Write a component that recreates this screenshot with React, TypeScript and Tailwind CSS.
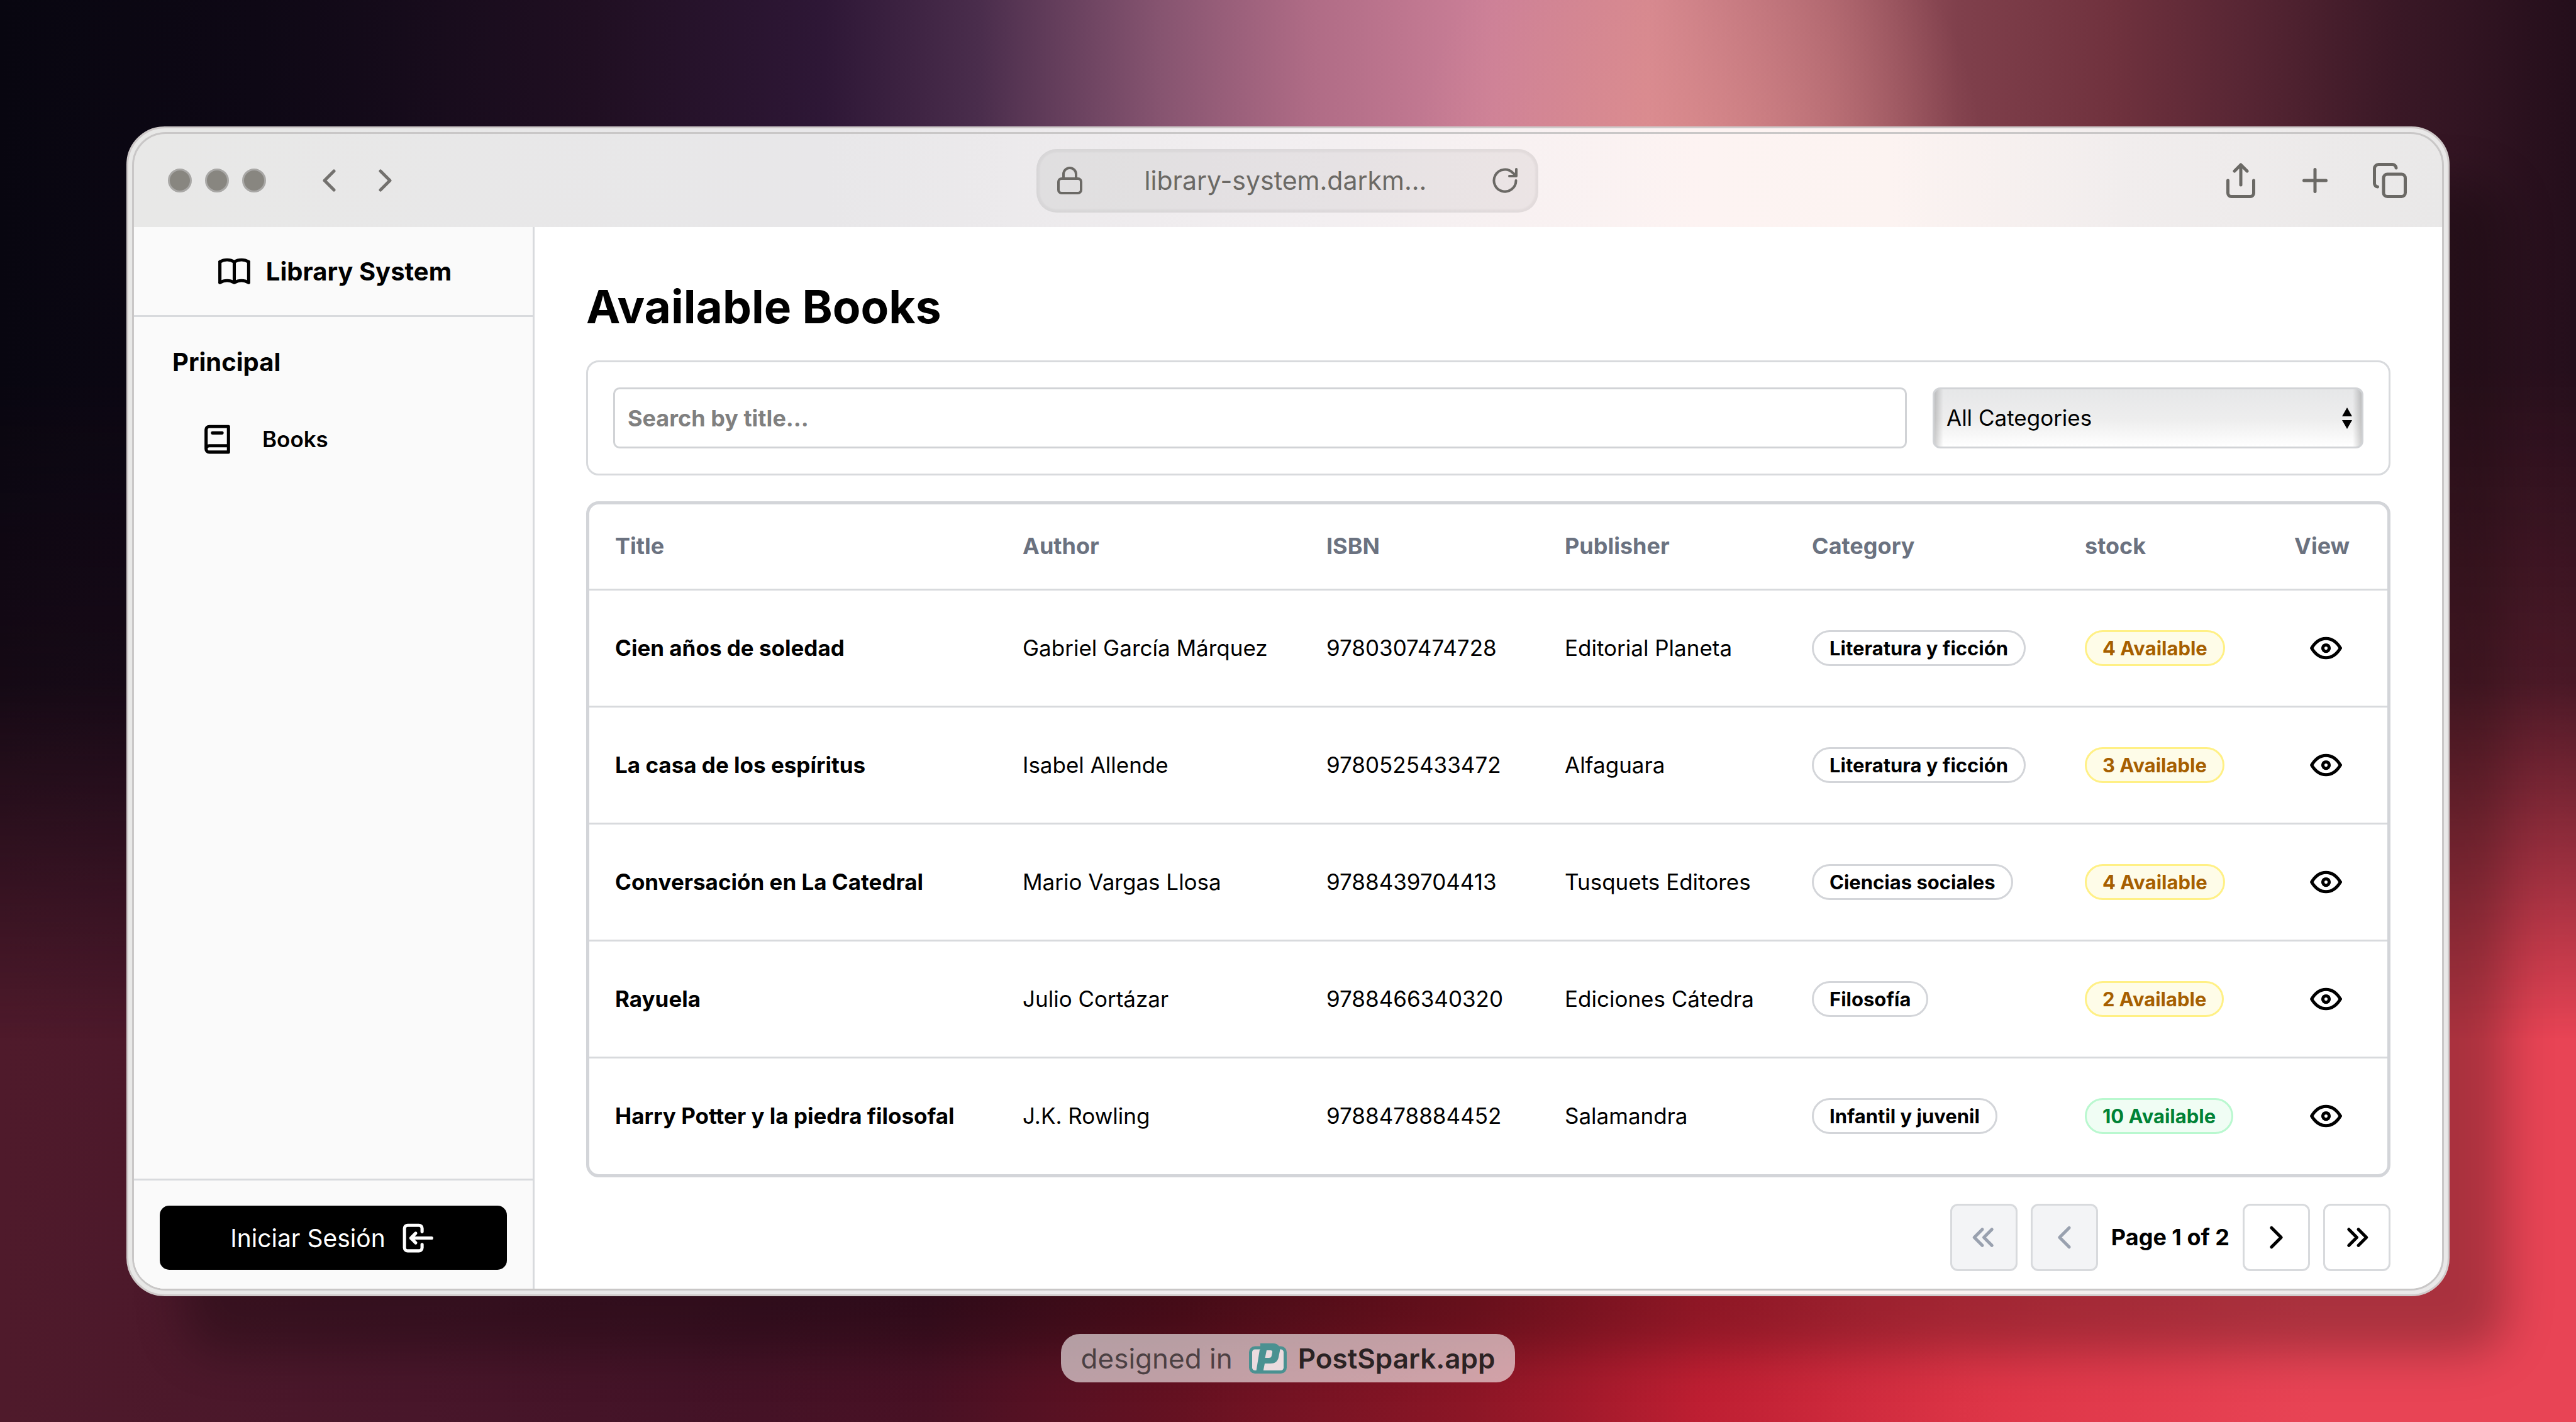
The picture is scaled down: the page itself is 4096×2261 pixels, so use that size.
import type { ReactNode } from "react";

type Book = {
  title: string;
  author: string;
  isbn: string;
  publisher: string;
  category: string;
  stock: number;
};

const BOOKS: Book[] = [
  { title: "Cien años de soledad", author: "Gabriel García Márquez", isbn: "9780307474728", publisher: "Editorial Planeta", category: "Literatura y ficción", stock: 4 },
  { title: "La casa de los espíritus", author: "Isabel Allende", isbn: "9780525433472", publisher: "Alfaguara", category: "Literatura y ficción", stock: 3 },
  { title: "Conversación en La Catedral", author: "Mario Vargas Llosa", isbn: "9788439704413", publisher: "Tusquets Editores", category: "Ciencias sociales", stock: 4 },
  { title: "Rayuela", author: "Julio Cortázar", isbn: "9788466340320", publisher: "Ediciones Cátedra", category: "Filosofía", stock: 2 },
  { title: "Harry Potter y la piedra filosofal", author: "J.K. Rowling", isbn: "9788478884452", publisher: "Salamandra", category: "Infantil y juvenil", stock: 10 },
];

function Icon({ children }: { children: ReactNode }) {
  return (
    <svg
      viewBox="0 0 24 24"
      fill="none"
      stroke="currentColor"
      strokeWidth="2"
      strokeLinecap="round"
      strokeLinejoin="round"
      aria-hidden="true"
      className="size-[61px] shrink-0"
    >
      {children}
    </svg>
  );
}

function Backdrop() {
  return (
    <div className="absolute inset-0 -z-10 overflow-hidden bg-[linear-gradient(to_right,#4f1a2b_0%,#48162a_16%,#3f1024_36%,#5a1020_46%,#8c1626_57%,#c62034_66%,#dd3446_76%,#e84455_90%,#e84455_100%)]">
      <div className="absolute inset-0 bg-[linear-gradient(to_right,#080610_0%,#0e0815_10%,#200f22_23%,#2e1736_32%,#4a2d4c_38%,#865470_45%,#b06c86_51%,#cc8098_58%,#d3868f_64%,#a8606a_71%,#80404c_76%,#70323e_82%,#582634_87%,#3a1826_93%,#240e1b_100%)] [mask-image:linear-gradient(to_bottom,black_26%,#000000d0_48%,transparent_73%)]" />
      <div className="absolute inset-0 bg-[radial-gradient(ellipse_11%_22%_at_66%_12%,#e3929099_0%,#e3929000_100%)]" />
      <div className="absolute inset-0 bg-[radial-gradient(ellipse_26%_14%_at_52%_100%,#8c162650_0%,#8c162600_100%)]" />
    </div>
  );
}

function BrowserBar() {
  return (
    <header className="grid h-[148px] shrink-0 grid-cols-[1fr_798px_1fr] items-center pr-[56px] pl-[54px] text-[#6b6965]">
      <div className="flex items-center">
        <div className="flex gap-[21px]">
          <span className="size-[38px] rounded-full border-[3px] border-[#a9a8a6] bg-[#888680]" />
          <span className="size-[38px] rounded-full border-[3px] border-[#a9a8a6] bg-[#888680]" />
          <span className="size-[38px] rounded-full border-[3px] border-[#a9a8a6] bg-[#888680]" />
        </div>
        <button type="button" aria-label="Back" className="ml-[88px]">
          <svg viewBox="0 0 24 36" className="h-[36px] w-[24px]" fill="none" stroke="#73716e" strokeWidth="5" strokeLinecap="round" strokeLinejoin="round">
            <path d="M20 3 5 18l15 15" />
          </svg>
        </button>
        <button type="button" aria-label="Forward" className="ml-[66px]">
          <svg viewBox="0 0 24 36" className="h-[36px] w-[24px]" fill="none" stroke="#73716e" strokeWidth="5" strokeLinecap="round" strokeLinejoin="round">
            <path d="m4 3 15 15L4 33" />
          </svg>
        </button>
      </div>
      <div className="flex h-[101px] items-center rounded-[32px] bg-black/5 px-[33px] shadow-[inset_0_0_3px_5px_#0000000a]">
        <svg viewBox="0 0 40 44" className="h-[44px] w-[40px]" fill="none" stroke="currentColor" strokeWidth="4">
          <rect x="2" y="19" width="36" height="23" rx="5" />
          <path d="M10 19v-7a10 10 0 0 1 20 0v7" />
        </svg>
        <span className="flex-1 pr-[6px] text-center text-[41px] leading-[50px]">library-system.darkm...</span>
        <button type="button" aria-label="Reload">
          <svg viewBox="0 0 40 40" className="size-[40px]" fill="none" stroke="currentColor" strokeWidth="4" strokeLinecap="round" strokeLinejoin="round">
            <path d="M37.500 20A17.500 17.500 0 1 1 32.500 7.800L37 12" />
            <path d="M38 2v11H27" />
          </svg>
        </button>
      </div>
      <div className="flex items-center justify-end">
        <button type="button" aria-label="Share">
          <svg viewBox="0 0 46 56" className="h-[56px] w-[46px]" fill="none" stroke="currentColor" strokeWidth="5" strokeLinecap="round" strokeLinejoin="round">
            <path d="M2.500 28v20a5.500 5.500 0 0 0 5.500 5.500h30a5.500 5.500 0 0 0 5.500-5.500V28M23 35V3M13 13 23 3l10 10" />
          </svg>
        </button>
        <button type="button" aria-label="New tab" className="ml-[75px]">
          <svg viewBox="0 0 40 40" className="size-[40px]" fill="none" stroke="currentColor" strokeWidth="5" strokeLinecap="round">
            <path d="M20 2.500v35M2.500 20h35" />
          </svg>
        </button>
        <button type="button" aria-label="Show tabs" className="ml-[72px]">
          <svg viewBox="0 0 54 56" className="h-[56px] w-[54px]" fill="none" stroke="currentColor" strokeWidth="5" strokeLinecap="round" strokeLinejoin="round">
            <rect x="17" y="18" width="34.500" height="35.500" rx="6" />
            <path d="M7.500 38a5.500 5.500 0 0 1-5-5.500V9a6.500 6.500 0 0 1 6.500-6.500h22A6 6 0 0 1 37 8" />
          </svg>
        </button>
      </div>
    </header>
  );
}

function Sidebar() {
  return (
    <aside className="flex w-[637px] shrink-0 flex-col border-r-[3px] border-[#d8dadd] bg-[#fafafa]">
      <div className="flex h-[143px] items-center justify-center gap-[20px] border-b-[3px] border-[#d8dadd]">
        <Icon>
          <path d="M3 19a9 9 0 0 1 9 0a9 9 0 0 1 9 0M3 6a9 9 0 0 1 9 0a9 9 0 0 1 9 0M3 6v13M12 6v13M21 6v13" />
        </Icon>
        <span className="text-[40px] leading-[61px] font-bold">Library System</span>
      </div>
      <nav className="flex-1 px-[41px] pt-[41px]">
        <h2 className="px-[20px] text-[40px] leading-[61px] font-bold">Principal</h2>
        <a href="#books" className="mt-[41px] flex h-[102px] items-center gap-[41px] px-[61px] text-[35px] leading-[51px] font-semibold">
          <Icon>
            <path d="M19 4v16h-12a2 2 0 0 1-2-2v-12a2 2 0 0 1 2-2h12zM19 16h-12a2 2 0 0 0-2 2M9 8h6" />
          </Icon>
          Books
        </a>
      </nav>
      <div className="border-t-[3px] border-[#d8dadd] px-[41px] pt-[40px] pb-[30px]">
        <button type="button" className="flex h-[102px] w-full items-center justify-center gap-[20px] rounded-[15px] bg-black text-[39px] leading-[61px] text-white">
          Iniciar Sesión
          <Icon>
            <path d="M15 8v-2a2 2 0 0 0-2-2h-7a2 2 0 0 0-2 2v12a2 2 0 0 0 2 2h7a2 2 0 0 0 2-2v-2M21 12h-13l3-3M11 15l-3-3" />
          </Icon>
        </button>
      </div>
    </aside>
  );
}

function Filters() {
  return (
    <div className="mt-[40px] flex gap-[41px] rounded-[20px] border-[3px] border-[#d8dadd] p-[40px]">
      <input
        type="text"
        aria-label="Search by title"
        placeholder="Search by title..."
        className="h-[97px] min-w-0 flex-1 rounded-[10px] border-[3px] border-[#d1d3d6] px-[20px] text-[36px] font-bold placeholder:text-[#808080]"
      />
      <div className="relative">
        <select
          aria-label="Category"
          className="h-[97px] w-[685px] appearance-none rounded-[12px] border-[3px] border-[#d1d3d6] bg-[linear-gradient(to_right,#00000030,#00000000_14px,#00000000_calc(100%-14px),#00000030),linear-gradient(to_bottom,#e6e7e8,#eeeeee_55%,#ffffff)] px-[19px] text-[35px]"
        >
          <option>All Categories</option>
        </select>
        <svg viewBox="0 0 16 34" className="pointer-events-none absolute top-[32px] right-[18px] h-[34px] w-[16px]" aria-hidden="true">
          <path d="M8 0l8 14H0zM8 34l8-14H0z" />
        </svg>
      </div>
    </div>
  );
}

function StockBadge({ count }: { count: number }) {
  const tone = count >= 10 ? "border-[#b9f8cf] bg-[#f0fdf4] text-[#008236]" : "border-[#fff085] bg-[#fefce8] text-[#a65f00]";
  return (
    <span className={`inline-flex h-[57px] items-center rounded-full border-[3px] px-[25px] text-[31px] leading-[41px] font-bold ${tone}`}>
      {count} Available
    </span>
  );
}

function BookTable() {
  return (
    <div className="mt-[41px] overflow-hidden rounded-[20px] border-[5px] border-[#d3d5d9]">
      <table className="w-full table-fixed border-collapse text-left text-[35px] leading-[51px]">
        <colgroup>
          <col className="w-[648px]" />
          <col className="w-[483px]" />
          <col className="w-[379px]" />
          <col className="w-[393px]" />
          <col className="w-[434px]" />
          <col className="w-[333px]" />
          <col className="w-[189px]" />
        </colgroup>
        <thead>
          <tr className="h-[135px] border-b-[3px] border-[#d8dadd] text-[36px] text-[#6b7280]">
            {["Title", "Author", "ISBN", "Publisher", "Category", "stock", "View"].map((name) => (
              <th key={name} scope="col" className="px-[41px] font-bold">
                {name}
              </th>
            ))}
          </tr>
        </thead>
        <tbody>
          {BOOKS.map((book) => (
            <tr key={book.isbn} className="h-[186px] border-b-[3px] border-[#d8dadd] last:border-b-0">
              <td className="px-[41px] font-bold whitespace-nowrap">{book.title}</td>
              <td className="px-[41px] whitespace-nowrap">{book.author}</td>
              <td className="px-[41px] whitespace-nowrap">{book.isbn}</td>
              <td className="px-[41px] whitespace-nowrap">{book.publisher}</td>
              <td className="px-[41px] whitespace-nowrap">
                <span className="inline-flex h-[57px] items-center rounded-full border-[3px] border-[#d3d5d9] px-[25px] text-[31px] leading-[41px] font-bold">
                  {book.category}
                </span>
              </td>
              <td className="px-[41px] whitespace-nowrap">
                <StockBadge count={book.stock} />
              </td>
              <td className="px-[41px]">
                <button type="button" aria-label={`View ${book.title}`} className="flex px-[20px]">
                  <Icon>
                    <path d="M10 12a2 2 0 1 0 4 0a2 2 0 0 0-4 0" />
                    <path d="M21 12c-2.400 4-5.400 6-9 6c-3.600 0-6.600-2-9-6c2.400-4 5.400-6 9-6c3.600 0 6.600 2 9 6" />
                  </Icon>
                </button>
              </td>
            </tr>
          ))}
        </tbody>
      </table>
    </div>
  );
}

function PageButton({ label, disabled = false, children }: { label: string; disabled?: boolean; children: ReactNode }) {
  return (
    <button
      type="button"
      aria-label={label}
      disabled={disabled}
      className="flex size-[107px] items-center justify-center rounded-[12px] border-[3px] border-[#d8dadd] bg-white disabled:bg-[#f3f4f6] disabled:text-[#99a1af]"
    >
      <Icon>{children}</Icon>
    </button>
  );
}

function Pagination() {
  return (
    <nav aria-label="Pages" className="mt-[42px] flex items-center justify-end gap-[21px]">
      <PageButton label="First page" disabled>
        <path d="M11 7l-5 5l5 5M17 7l-5 5l5 5" />
      </PageButton>
      <PageButton label="Previous page" disabled>
        <path d="M15 6l-6 6l6 6" />
      </PageButton>
      <span className="text-[36px] leading-[51px] font-bold">Page 1 of 2</span>
      <PageButton label="Next page">
        <path d="M9 6l6 6l-6 6" />
      </PageButton>
      <PageButton label="Last page">
        <path d="M7 7l5 5l-5 5M13 7l5 5l-5 5" />
      </PageButton>
    </nav>
  );
}

function CreditBadge() {
  return (
    <a href="#postspark" className="flex h-[77px] items-center rounded-[30px] bg-white/60 px-[32px] text-[44px] leading-[60px] text-black/60">
      designed in
      <svg viewBox="0 0 60 48" className="mr-[18px] ml-[26px] h-[48px] w-[60px]" aria-hidden="true">
        <rect x="2.500" y="7" width="55" height="38.500" rx="7" fill="#ecdcdf" stroke="#4a9191" strokeWidth="5" />
        <path
          d="M18 0h20c8 0 12 5 11 12l-2 10c-1.500 7-6 10-13 10h-9l-3 15H11L17 10h1zM28 11l-2.500 12h6c3 0 4-1 4.500-3.500l1-5c.5-2.500-.5-3.500-3-3.500z"
          fill="#4a9191"
          fillRule="evenodd"
        />
      </svg>
      <span className="font-semibold text-black/80">PostSpark.app</span>
    </a>
  );
}

export default function App() {
  return (
    <div className="relative isolate flex min-h-screen flex-col items-center px-[201px] pt-[201px] font-[Inter,sans-serif] text-black">
      <Backdrop />
      <div className="flex w-full flex-1 flex-col rounded-[61px] border-[3px] border-[#cfcaca] bg-[linear-gradient(to_right,#e8e8e7_0%,#e8e7e9_30%,#f3eff1_52%,#fdf3f2_68%,#fcf3f1_76%,#f1eded_86%,#e9e8e8_100%)] p-[6px] shadow-[90px_90px_75px_0_#00000045]">
        <div className="flex flex-1 flex-col overflow-hidden rounded-[53px] border-[3px] border-[#c9c7c7]">
          <BrowserBar />
          <div className="flex flex-1 bg-white">
            <Sidebar />
            <main className="min-w-0 flex-1 px-[82px] pt-[82px] pb-[28px]">
              <h1 className="text-[73px] leading-[90px] font-bold">Available Books</h1>
              <Filters />
              <BookTable />
              <Pagination />
            </main>
          </div>
        </div>
      </div>
      <footer className="flex h-[202px] items-start pt-[60px]">
        <CreditBadge />
      </footer>
    </div>
  );
}
